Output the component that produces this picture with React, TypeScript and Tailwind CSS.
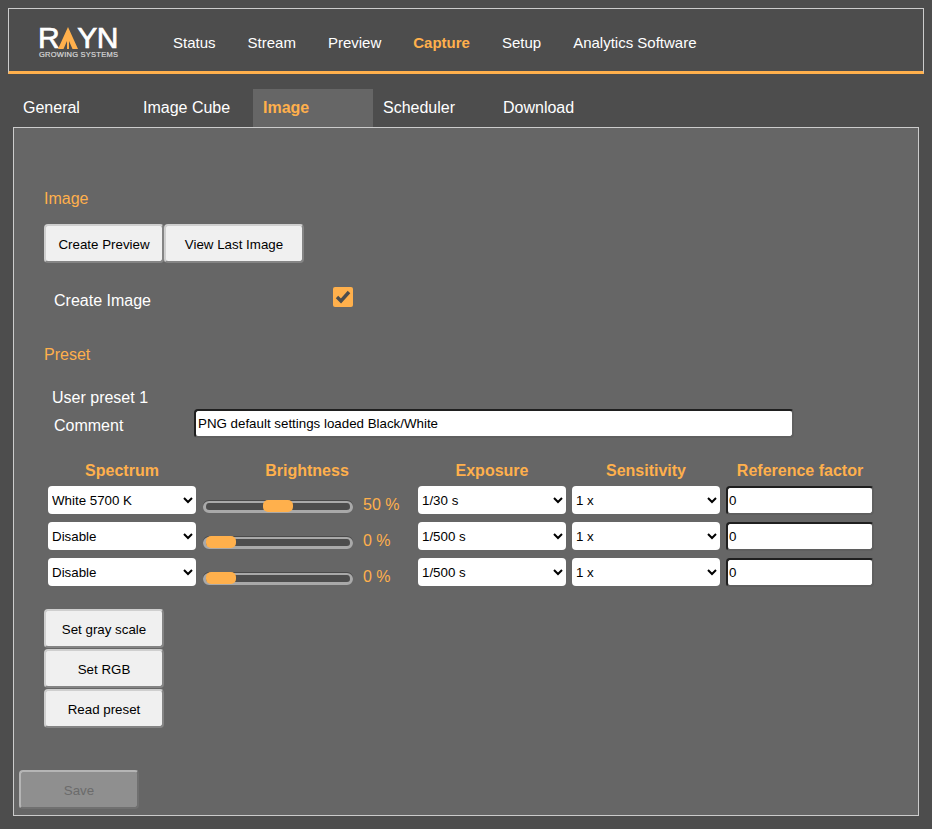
import React from 'react'

const FONT = "font-['Liberation_Sans',Arial,sans-serif]"

const NAV = [
    { label: 'Status', className: 'ml-[55px]' },
    { label: 'Stream', className: 'ml-[32px]' },
    { label: 'Preview', className: 'ml-[32px]' },
    { label: 'Capture', className: 'ml-[32px] font-bold text-[#ffb04c]' },
    { label: 'Setup', className: 'ml-[32px]' },
    { label: 'Analytics Software', className: 'ml-[32px]' },
]

const TABS = ['General', 'Image Cube', 'Image', 'Scheduler', 'Download']

const ROWS = [
    { spectrum: 'White 5700 K', brightness: 50, exposure: '1/30 s' },
    { spectrum: 'Disable', brightness: 0, exposure: '1/500 s' },
    { spectrum: 'Disable', brightness: 0, exposure: '1/500 s' },
]

const COLUMN_TITLE = 'mb-[-2px] text-center text-[16px] leading-[18px] font-bold text-[#ffb04c]'

function Logo() {
    return (
        <div className="mt-[-2px] flex w-[80px] flex-col text-white">
            <div className="flex h-[24px] items-center text-[30px] leading-[24px] tracking-[-0.5px] [-webkit-text-stroke:0.7px_white]">
                <span>R</span>
                <svg width="22" height="22" viewBox="0 0 22 22" className="mx-[-2px] shrink-0">
                    <path d="M11 0 L21 22 L15.5 22 L12 14 L12 22 L10 22 L10 14 L6.5 22 L1 22 Z" fill="#ffb04c" />
                </svg>
                <span>YN</span>
            </div>
            <div className="mt-[1px] ml-[1px] text-[7.5px] leading-[8px] tracking-[0.25px] whitespace-nowrap text-[#d8d8d8] [-webkit-text-stroke:0.2px_#d8d8d8]">GROWING SYSTEMS</div>
        </div>
    )
}

function GrayButton({ label, className }: { label: string; className: string }) {
    return (
        <button type="button" className={`h-[39px] rounded-[4px] border-2 border-t-[#cfcfcf] border-r-[#858585] border-b-[#858585] border-l-[#cfcfcf] bg-[#f0f0f0] pt-[2px] text-[13.33px] text-black ${className}`}>
            {label}
        </button>
    )
}

function Slider({ value }: { value: number }) {
    return (
        <div className="flex h-[12px] w-[150px] items-center rounded-[6px] border-[3px] border-t-2 border-[#a9a9a9] bg-[#4d4d4d] shadow-[0_-1px_0_#4a4a4a]">
            <div className="h-[12px] w-[30px] shrink-0 rounded-[5px] bg-[#ffb04c]" style={{ marginLeft: value * 1.14 }} />
        </div>
    )
}

function Select({ value }: { value: string }) {
    return (
        <select defaultValue={value} className="h-[28px] w-[148px] rounded-[4px] border-0 bg-white pl-0 text-[13.33px] text-black">
            <option>{value}</option>
        </select>
    )
}

export default function App() {
    return (
        <div className={`${FONT} h-[829px] w-[932px] overflow-hidden bg-[#4d4d4d] pt-[8px] text-white`}>
            <div className="mx-[8px] flex h-[66px] items-center border border-b-[3px] border-[#cccccc] border-b-[#ffb04c] pt-[6px] pl-[29px]">
                <Logo />
                {NAV.map((n) => (
                    <span key={n.label} className={`text-[15px] ${n.className}`}>{n.label}</span>
                ))}
            </div>

            <div className="mx-[13px] mt-[15px] flex h-[38px]">
                {TABS.map((t) => (
                    <div key={t} className={`flex w-[120px] items-center pl-[10px] text-[16px] ${t === 'Image' ? 'bg-[#666666] font-bold text-[#ffb04c]' : ''}`}>{t}</div>
                ))}
            </div>

            <div className="mx-[13px] h-[689px] border border-[#cccccc] bg-[#666666] pt-[62px]">
                <h2 className="ml-[30px] text-[16px] leading-[18px] text-[#ffb04c]">Image</h2>

                <div className="mt-[16px] ml-[30px] flex">
                    <GrayButton label="Create Preview" className="w-[120px]" />
                    <GrayButton label="View Last Image" className="w-[140px]" />
                </div>

                <div className="mt-[24px] ml-[40px] flex h-[22px] items-start">
                    <span className="w-[279px] pt-[5px] text-[16px] leading-[18px]">Create Image</span>
                    <span className="flex h-[20px] w-[20px] items-center justify-center rounded-[2px] bg-[#ffb04c]">
                        <svg width="16" height="14" viewBox="0 0 16 14">
                            <path d="M2 7 L6 11 L14 2" fill="none" stroke="#4d4d4d" strokeWidth="3.4" />
                        </svg>
                    </span>
                </div>

                <h2 className="mt-[37px] ml-[30px] text-[16px] leading-[18px] text-[#ffb04c]">Preset</h2>

                <div className="mt-[25px] ml-[38px] text-[16px] leading-[18px]">User preset 1</div>

                <div className="mt-[2px] ml-[40px] flex h-[29px] items-center">
                    <span className="w-[140px] pt-[4px] text-[16px]">Comment</span>
                    <input
                        readOnly
                        value="PNG default settings loaded Black/White"
                        className="h-[29px] w-[600px] rounded-[4px] border-2 border-t-[#1f1f1f] border-r-[#5f5f5f] border-b-[#5f5f5f] border-l-[#1f1f1f] bg-white pl-[2px] text-[13.33px] text-black outline-none"
                    />
                </div>

                <div className="mt-[24px] ml-[34px] grid grid-cols-[148px_210px_148px_148px_148px] items-start gap-x-[6px] gap-y-[8px]">
                    <div className={COLUMN_TITLE}>Spectrum</div>
                    <div className={COLUMN_TITLE}>Brightness</div>
                    <div className={COLUMN_TITLE}>Exposure</div>
                    <div className={COLUMN_TITLE}>Sensitivity</div>
                    <div className={COLUMN_TITLE}>Reference factor</div>

                    {ROWS.map((r, i) => (
                        <React.Fragment key={i}>
                            <Select value={r.spectrum} />
                            <div className="flex h-[28px] items-center pt-[13px] pl-[1px]">
                                <Slider value={r.brightness} />
                                <span className="mb-[4px] ml-[10px] text-[16px] leading-[18px] text-[#ffb04c]">{r.brightness} %</span>
                            </div>
                            <Select value={r.exposure} />
                            <Select value="1 x" />
                            <input
                                readOnly
                                value="0"
                                className="mb-[-1px] h-[29px] w-[148px] rounded-[4px] border-2 border-t-[#1f1f1f] border-r-[#5f5f5f] border-b-[#5f5f5f] border-l-[#1f1f1f] bg-white pl-[1px] text-[13.33px] text-black outline-none"
                            />
                        </React.Fragment>
                    ))}
                </div>

                <div className="mt-[23px] ml-[30px] flex w-[120px] flex-col gap-[1px]">
                    <GrayButton label="Set gray scale" className="w-[120px]" />
                    <GrayButton label="Set RGB" className="w-[120px]" />
                    <GrayButton label="Read preset" className="w-[120px]" />
                </div>

                <button type="button" className="mt-[42px] ml-[5px] h-[39px] w-[120px] rounded-[4px] border-2 border-t-[#b5b5b5] border-r-[#707070] border-b-[#707070] border-l-[#b5b5b5] bg-[#8f8f8f] pt-[2px] text-[13.33px] text-[#6b6b6b]">
                    Save
                </button>
            </div>
        </div>
    )
}
